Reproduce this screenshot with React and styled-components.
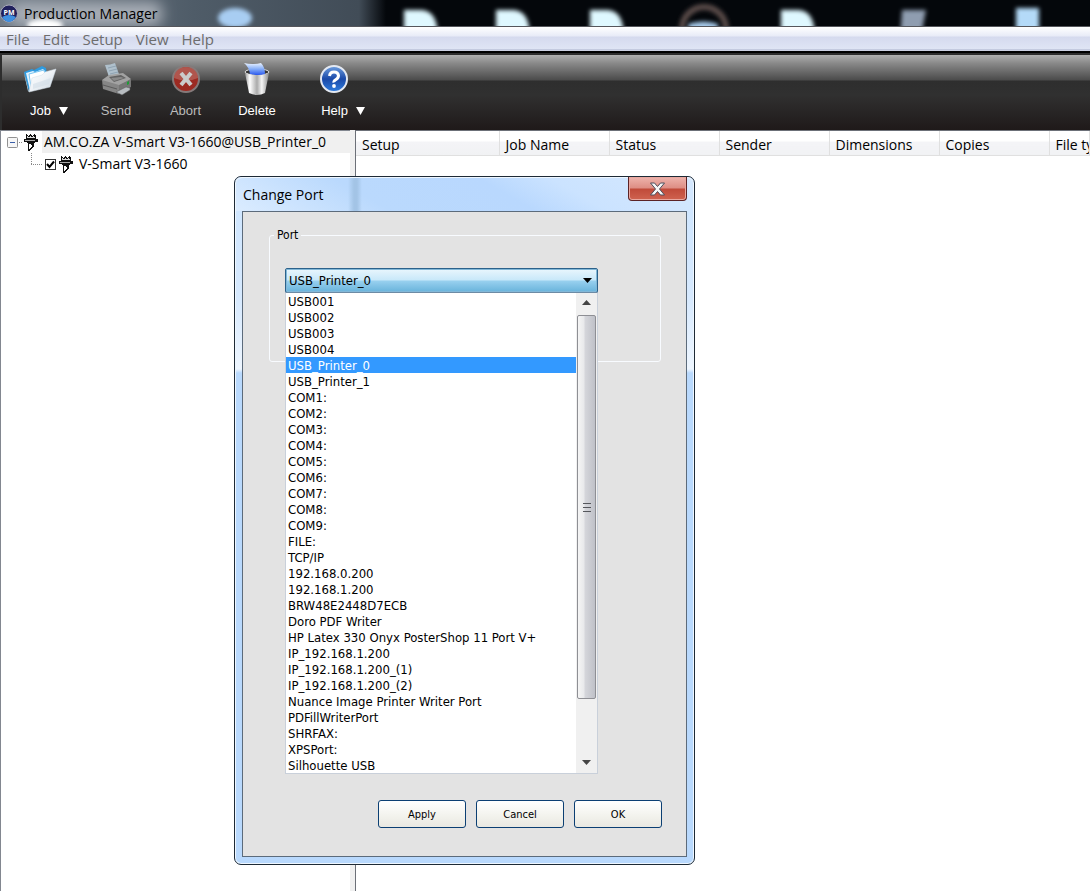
import React from 'react'
import styled, { createGlobalStyle } from 'styled-components'

const GlobalStyle = createGlobalStyle`
  * {
    box-sizing: border-box;
  }

  body {
    margin: 0;
    background: #fff;
    color: #000;
    font-family: 'Open Sans', 'Noto Sans', sans-serif;
    font-size: 14px;
  }

  button,
  select,
  input {
    margin: 0;
    font: inherit;
    color: inherit;
  }
`

const Window = styled.div`
  display: flex;
  flex-direction: column;
  min-height: 100vh;
  position: relative;
  overflow: hidden;
`

const TitleBar = styled.header`
  display: flex;
  align-items: center;
  gap: 5px;
  height: 27px;
  position: relative;
  overflow: hidden;
  background: #04070b;
  border-bottom: 1px solid #55565c;
`

const Backdrop = styled.svg`
  position: absolute;
  inset: 0;
  width: 100%;
  height: 26px;
`

const AppIcon = styled.svg`
  position: relative;
  width: 19px;
  height: 19px;
  flex: none;
`

const Title = styled.h1`
  position: relative;
  margin: 0;
  padding-top: 2px;
  font-size: 14px;
  line-height: 20px;
  font-weight: 400;
`

const MenuBar = styled.nav`
  display: flex;
  gap: 13px;
  height: 26px;
  padding: 0 6px;
  border-bottom: 2px solid #000;
  background: linear-gradient(
    #fff 0,
    #e8ebf7 9px,
    #d5daee 10px,
    #dfe5f5 22px,
    #a9b0ca 23px,
    #eef1fa 24px
  );
`

const MenuItem = styled.a`
  color: #6d6d6d;
  font-size: 15px;
  line-height: 24px;
  text-decoration: none;
`

const ToolBar = styled.div`
  display: flex;
  height: 77px;
  border: solid #2d2d2d;
  border-width: 2px 0 0 2px;
  background: linear-gradient(
    #b0b0b0 0,
    #8a8a8a 8px,
    #4b4b4b 25px,
    #2e2e2e 26px,
    #303030 40px,
    #1f1a1a 74px
  );
`

const Tool = styled.button`
  display: flex;
  flex-direction: column;
  align-items: center;
  gap: 7px;
  width: ${({ $width }) => $width}px;
  padding: 7px 0 0;
  border: 0;
  background: none;
  color: #fff;
  font-family: 'Liberation Sans', sans-serif;
  font-size: 13px;
  line-height: 16px;

  &:disabled {
    color: #bcbcbc;
  }
`

const ToolIcon = styled.svg`
  width: 34px;
  height: 34px;
  margin-right: ${({ $shift }) => ($shift ? '18px' : 0)};
`

const ToolLabel = styled.span`
  display: flex;
  align-items: center;
  gap: 8px;
`

const Caret = styled.svg`
  width: 9px;
  height: 8px;
`

const Workspace = styled.main`
  display: grid;
  grid-template-columns: 350px 1fr;
  gap: 5px;
  flex: 1;
  background: #f0f0f0;
`

const TreePane = styled.section`
  border: solid #828790;
  border-width: 1px 0 0 1px;
  background: #fff;
`

const TreeRow = styled.div`
  display: flex;
  align-items: center;
  height: 22px;
  padding-left: ${({ $child }) => ($child ? 30 : 6)}px;
`

const Expander = styled.svg`
  width: ${({ $width }) => $width}px;
  height: 22px;
  flex: none;
`

const PlotterIcon = styled.svg`
  width: 14px;
  height: 17px;
  flex: none;
  margin-left: ${({ $gap }) => $gap}px;
`

const TreeText = styled.label`
  flex: 1;
  margin-left: 4px;
  padding-left: 2px;
  line-height: 22px;
  white-space: nowrap;
  background: ${({ $active }) => ($active ? '#f0f0f0' : 'none')};
`

const TreeCheck = styled.input`
  appearance: none;
  width: 11px;
  height: 11px;
  flex: none;
  border: 1px solid #333;
  background: #fff
    url("data:image/svg+xml,%3Csvg xmlns='http://www.w3.org/2000/svg' viewBox='0 0 9 9'%3E%3Cpath d='M1 4l2.5 3L8 1.5' fill='none' stroke='%23000' stroke-width='2'/%3E%3C/svg%3E")
    center / 9px 9px no-repeat;
`

const JobPane = styled.section`
  overflow: hidden;
  border: solid #6c7078;
  border-width: 1px 0 0 1px;
  background: #fff;
`

const JobTable = styled.table`
  table-layout: fixed;
  width: 100%;
  border-collapse: collapse;
`

const Column = styled.th`
  width: ${({ $width }) => ($width ? `${$width}px` : 'auto')};
  height: 24px;
  padding: 3px 0 0 6px;
  border: solid #e0e0e0;
  border-width: 0 1px 1px 0;
  overflow: hidden;
  background: linear-gradient(#fff 10px, #f4f4f7 11px, #f1f2f4);
  font-weight: 400;
  text-align: left;
  white-space: nowrap;
`

const Dialog = styled.section`
  position: absolute;
  top: 176px;
  left: 234px;
  display: flex;
  flex-direction: column;
  width: 461px;
  height: 689px;
  padding: 0 7px 7px;
  border: 1px solid #1e2a36;
  border-radius: 7px;
  background:
    linear-gradient(#cde5ff 0, #d6e9fe 120px, #eef6ff 192px, transparent 196px),
    #b9d9fd;
  box-shadow: inset 0 0 0 1px #eff7ff;
`

const DialogHeader = styled.div`
  display: flex;
  justify-content: space-between;
  height: 34px;
  flex: none;
  margin: 0 -6px;
  padding-left: 7px;
  border-radius: 6px 6px 0 0;
  box-shadow: inset 0 1px #eff7ff;
  background:
    linear-gradient(90deg, transparent 112px, #a3c4e6 118px, #a3c4e6 121px, transparent 126px),
    linear-gradient(30deg, #dbecff 0, #bad9fd 30%, #b9d8fe 58%, #cbe3ff 72%, #d5e8fe);
`

const DialogTitle = styled.h2`
  margin: 0;
  font-size: 14px;
  line-height: 35px;
  font-weight: 400;
`

const CloseButton = styled.button`
  display: flex;
  align-items: center;
  justify-content: center;
  width: 59px;
  height: 24px;
  margin-right: 6px;
  padding: 0;
  border: 1px solid #5b2326;
  border-top: 0;
  border-radius: 0 0 4px 4px;
  background: linear-gradient(#eeb4ad, #dd8d84 11px, #c04a3a 12px, #cf6350);
  box-shadow: inset 0 0 0 1px #e9a8a0;
`

const DialogBody = styled.form`
  display: flex;
  flex-direction: column;
  flex: 1;
  padding: 15px 25px 28px 26px;
  border: 1px solid #5c6b7b;
  background: #e3e3e3;
  font-family: 'DejaVu Sans Condensed', 'DejaVu Sans', sans-serif;
  font-size: 13px;
`

const PortGroup = styled.fieldset`
  height: 135px;
  margin: 0;
  padding: 25px 15px 0;
  border: 1px solid #f8fbff;
  border-radius: 3px;
`

const Legend = styled.legend`
  margin-left: -11px;
  padding: 0 3px;
  font-size: 12px;
  line-height: 16px;
`

const PortField = styled.div`
  position: relative;
  width: 313px;
`

const PortSelect = styled.select`
  appearance: none;
  display: block;
  width: 100%;
  height: 25px;
  padding: 0 3px;
  border: 1px solid #2c628b;
  border-radius: 2px;
  outline: 0;
  background: linear-gradient(#e9f6fd, #c8e8f9 11px, #98d0ef 12px, #68b3db);
  box-shadow: inset 0 0 0 1px #82b8d8;
`

const SelectArrow = styled(Caret)`
  position: absolute;
  top: 10px;
  right: 6px;
  height: 5px;
  pointer-events: none;
`

const DropDown = styled.div`
  position: absolute;
  top: 24px;
  left: 0;
  display: flex;
  width: 313px;
  border: 1px solid #c9d0da;
  border-top-color: #6d8ba5;
  background: #fff;
`

const PortList = styled.ul`
  flex: 1;
  margin: 0;
  padding: 0;
  list-style: none;
`

const PortOption = styled.li`
  height: 16px;
  padding: 1px 0 0 2px;
  line-height: 16px;
  white-space: nowrap;
  color: ${({ $selected }) => ($selected ? '#fff' : '#000')};
  background: ${({ $selected }) => ($selected ? '#3399ff' : 'none')};
`

const ScrollBar = styled.div`
  display: flex;
  flex-direction: column;
  align-items: center;
  width: 21px;
  background: #f0f0f0;
`

const ScrollArrow = styled.svg`
  width: 9px;
  height: 22px;
  flex: none;
`

const Thumb = styled.div`
  display: flex;
  flex-direction: column;
  align-items: center;
  justify-content: center;
  gap: 3px;
  width: 19px;
  height: 384px;
  margin-bottom: auto;
  border: 1px solid #8e8f94;
  border-radius: 2px;
  background: linear-gradient(90deg, #f5f5f5 0, #e8e9eb 6px, #d5d6db 7px, #bfc1c8);
`

const Grip = styled.span`
  width: 8px;
  height: 1px;
  background: #55575c;
`

const Actions = styled.div`
  display: flex;
  justify-content: flex-end;
  gap: 10px;
  margin-top: auto;
  margin-right: -1px;
`

const ActionButton = styled.button`
  width: 88px;
  height: 28px;
  padding: 0;
  border: 1px solid #0b3f73;
  border-radius: 3px;
  background: linear-gradient(#fff, #f2f2ec 60%, #e9e8e2);
  font-size: 11px;
`

const menus = ['File', 'Edit', 'Setup', 'View', 'Help']

const columns = [
  ['Setup', 143],
  ['Job Name', 110],
  ['Status', 110],
  ['Sender', 110],
  ['Dimensions', 110],
  ['Copies', 110],
  ['File type'],
]

const ports = [
  'USB001',
  'USB002',
  'USB003',
  'USB004',
  'USB_Printer_0',
  'USB_Printer_1',
  'COM1:',
  'COM2:',
  'COM3:',
  'COM4:',
  'COM5:',
  'COM6:',
  'COM7:',
  'COM8:',
  'COM9:',
  'FILE:',
  'TCP/IP',
  '192.168.0.200',
  '192.168.1.200',
  'BRW48E2448D7ECB',
  'Doro PDF Writer',
  'HP Latex 330 Onyx PosterShop 11 Port V+',
  'IP_192.168.1.200',
  'IP_192.168.1.200_(1)',
  'IP_192.168.1.200_(2)',
  'Nuance Image Printer Writer Port',
  'PDFillWriterPort',
  'SHRFAX:',
  'XPSPort:',
  'Silhouette USB',
]

const DownCaret = () => (
  <Caret viewBox="0 0 9 8">
    <path d="M0 0h9L4.500 8z" fill="#fff" />
  </Caret>
)

function Plotter({ gap }) {
  return (
    <PlotterIcon viewBox="0 0 14 17" $gap={gap} shapeRendering="crispEdges">
      <path d="M2 0h1v1h1v1h1V1h1V0h1v1h1v1h1V1h1V0h1v1h1v4H2z" fill="#111" />
      <path d="M3 2h1v1h2V2h1v1h2V2h1v1h1v1H3z" fill="#ddd" />
      <path d="M0 5h14v3h-3v1H3V8H0z" fill="#111" />
      <path d="M1 6h10v1H1z" fill="#aaa" />
      <path d="M4 9h6v3l-4 5H4z" fill="#111" />
      <path d="M5 10h2l1 2-3 4z" fill="#fff" />
    </PlotterIcon>
  )
}

function JobIcon() {
  return (
    <ToolIcon viewBox="0 0 34 34" $shift>
      <defs>
        <linearGradient id="folder" x1="0" y1="0" x2="1" y2="1">
          <stop offset="0" stopColor="#fff" />
          <stop offset=".5" stopColor="#eef2f6" />
          <stop offset="1" stopColor="#c4d2de" />
        </linearGradient>
      </defs>
      <path d="M1 10l8-3 2 1 8-4 4 2 1 7L6 29z" fill="#2f9be0" />
      <path d="M3 11l7-2 2 1 8-3 2 2-1 11L7 28z" fill="#e4f4ff" />
      <path d="M6 12l15-4 2 10-15 7z" fill="#fff" stroke="#5bb7ee" strokeWidth=".8" />
      <path d="M1 10l5 20-1-1L2 16z" fill="#bfe2f8" />
      <path d="M9 16l10-3 3-3 11-3-6 18-21 5z" fill="url(#folder)" stroke="#d3dfe8" strokeWidth=".5" />
      <path d="M10 22l18-6-2 6-16 5z" fill="#d2dde8" opacity=".6" />
    </ToolIcon>
  )
}

function SendIcon() {
  return (
    <ToolIcon viewBox="0 0 34 34">
      <path d="M6 3q5 0 10-2l5 14-10 3z" fill="#afc0cc" />
      <path d="M9 6l8-2M10 9l8-2M11 12l8-2" stroke="#8fa3b2" />
      <path d="M3 18l7-5 14-2 8 6-10 7-15-2z" fill="#a2a2a2" />
      <path d="M10 15l12-2 5 3-12 4z" fill="#626262" />
      <path d="M12 16l10-1 3 1-10 3z" fill="#8a8a8a" />
      <path d="M3 18l17 5v9L4 27z" fill="#868686" />
      <path d="M20 23l12-6v8l-12 7z" fill="#767676" />
      <path d="M4 23l14 4" stroke="#5b5b5b" />
      <path d="M17 30l10-5 4 1v2l-8 5z" stroke="#555" strokeWidth=".5" fill="#b7bcc0" />
      <path d="M28 20l2-1v3l-2 1z" fill="#1d9c36" />
    </ToolIcon>
  )
}

function AbortIcon() {
  return (
    <ToolIcon viewBox="0 0 34 34">
      <circle cx="17" cy="17" r="13" fill="#9c2a22" stroke="#857a7a" strokeWidth="2" />
      <path d="M5 16a12 11 0 0 1 24 0q-12 5-24 0" fill="#b9685f" opacity=".7" />
      <path d="M12 11l10 12M22 11L12 23" stroke="#cbcbcb" strokeWidth="4" />
    </ToolIcon>
  )
}

function DeleteIcon() {
  return (
    <ToolIcon viewBox="0 0 34 34">
      <defs>
        <linearGradient id="bin">
          <stop offset="0" stopColor="#999" />
          <stop offset=".2" stopColor="#fff" />
          <stop offset=".5" stopColor="#aaa" />
          <stop offset=".7" stopColor="#f5f5f5" />
          <stop offset="1" stopColor="#888" />
        </linearGradient>
        <linearGradient id="sheet" x1="0" y1="0" x2="0" y2="1">
          <stop offset="0" stopColor="#eaf3ff" />
          <stop offset=".5" stopColor="#86aef8" />
          <stop offset="1" stopColor="#2a57ee" />
        </linearGradient>
      </defs>
      <ellipse cx="17" cy="10" rx="12" ry="3" fill="#333" stroke="#ddd" />
      <path d="M5 11q12 4 24 0l-4 20q-8 4-16 0z" fill="url(#bin)" />
      <path d="M4 1q8 2 17 0 4 4 4 11-7 2-15 0Q9 5 4 1z" fill="url(#sheet)" />
    </ToolIcon>
  )
}

function HelpIcon() {
  return (
    <ToolIcon viewBox="0 0 34 34" $shift>
      <defs>
        <linearGradient id="orb" x1="0" y1="0" x2="0" y2="1">
          <stop offset="0" stopColor="#6f9fe0" />
          <stop offset=".5" stopColor="#1a49a8" />
          <stop offset="1" stopColor="#2f7ee0" />
        </linearGradient>
      </defs>
      <circle cx="17" cy="17" r="13" fill="url(#orb)" stroke="#e4e9f2" strokeWidth="2" />
      <path d="M12.500 14q.5-4 4.500-4t4.500 3.500q0 2.500-2.500 4t-2 3" fill="none" stroke="#fff" strokeWidth="3" />
      <circle cx="17" cy="24" r="1.900" fill="#fff" />
    </ToolIcon>
  )
}

const tools = [
  { label: 'Job', Icon: JobIcon, menu: true, width: 94 },
  { label: 'Send', Icon: SendIcon, disabled: true, width: 40 },
  { label: 'Abort', Icon: AbortIcon, disabled: true, width: 99 },
  { label: 'Delete', Icon: DeleteIcon, width: 44 },
  { label: 'Help', Icon: HelpIcon, menu: true, width: 128 },
]

// blurred desktop showing through the title bar glass
function GlassBackdrop() {
  return (
    <Backdrop aria-hidden="true">
      <defs>
        <filter id="soft" x="-50%" y="-50%" width="200%" height="200%">
          <feGaussianBlur stdDeviation="2" />
        </filter>
        <filter id="wide" x="-50%" y="-50%" width="200%" height="200%">
          <feGaussianBlur stdDeviation="7" />
        </filter>
        <linearGradient id="haze">
          <stop offset="0" stopColor="#717b86" />
          <stop offset=".5" stopColor="#4f5c68" />
          <stop offset=".93" stopColor="#414c57" />
          <stop offset="1" stopColor="#04070b" />
        </linearGradient>
      </defs>
      <rect width="386" height="26" fill="url(#haze)" />
      <rect x="10" y="2" width="152" height="24" rx="8" fill="#a9afb7" filter="url(#wide)" />
      <ellipse cx="45" cy="25" rx="18" ry="6" fill="#fff" filter="url(#soft)" />
      <ellipse cx="235" cy="18" rx="17" ry="10" fill="#a8cdf2" filter="url(#soft)" />
      {[404, 496, 590, 781].map(x => (
        <path
          key={x}
          d={`M${x} 10h16c12 0 18 8 18 30h-34z`}
          fill="#dff8ff"
          filter="url(#soft)"
        />
      ))}
      <path d="M1016 8h23v32h-23z" fill="#b4daf8" filter="url(#soft)" />
      <path d="M902 10h24l-6 30h-20z" fill="#8f9db0" filter="url(#soft)" />
      <path d="M688 24q16-5 30 0v16h-30z" fill="#a8ccec" filter="url(#soft)" />
      <circle cx="704" cy="29" r="22" fill="none" stroke="#5a4c49" strokeWidth="6" filter="url(#soft)" />
    </Backdrop>
  )
}

function PortDialog() {
  return (
    <Dialog role="dialog" aria-labelledby="dialog-title">
      <DialogHeader>
        <DialogTitle id="dialog-title">Change Port</DialogTitle>
        <CloseButton aria-label="Close">
          <svg width="17" height="14" viewBox="0 0 17 14">
            <path
              d="M1.500 1h4l3 3.500 3-3.500h4l-5 6 5 6h-4l-3-3.500-3 3.500h-4l5-6z"
              fill="#f6f6f6"
              stroke="#4c4f5c"
            />
          </svg>
        </CloseButton>
      </DialogHeader>
      <DialogBody onSubmit={e => e.preventDefault()}>
        <PortGroup>
          <Legend>Port</Legend>
          <PortField>
            <PortSelect aria-label="Port" defaultValue="USB_Printer_0">
              {ports.map(port => (
                <option key={port}>{port}</option>
              ))}
            </PortSelect>
            <SelectArrow viewBox="0 0 9 5">
              <path d="M0 0h9L4.500 5z" />
            </SelectArrow>
            <DropDown>
              <PortList role="listbox" aria-label="Ports">
                {ports.map(port => (
                  <PortOption
                    key={port}
                    role="option"
                    aria-selected={port === 'USB_Printer_0'}
                    $selected={port === 'USB_Printer_0'}
                  >
                    {port}
                  </PortOption>
                ))}
              </PortList>
              <ScrollBar>
                <ScrollArrow viewBox="0 0 9 22">
                  <path d="M0 12h9L4.500 7z" fill="#444" />
                </ScrollArrow>
                <Thumb>
                  <Grip />
                  <Grip />
                  <Grip />
                </Thumb>
                <ScrollArrow viewBox="0 0 9 22">
                  <path d="M0 9h9l-4.500 5z" fill="#444" />
                </ScrollArrow>
              </ScrollBar>
            </DropDown>
          </PortField>
        </PortGroup>
        <Actions>
          <ActionButton type="button">Apply</ActionButton>
          <ActionButton type="button">Cancel</ActionButton>
          <ActionButton type="submit">OK</ActionButton>
        </Actions>
      </DialogBody>
    </Dialog>
  )
}

export default function App() {
  return (
    <Window>
      <GlobalStyle />
      <TitleBar>
        <GlassBackdrop />
        <AppIcon viewBox="0 0 19 19">
          <circle cx="9" cy="9.500" r="8.500" fill="#20205c" stroke="#aab" />
          <path d="M2 13q7-4 14 0-3 5-7 5t-7-5" fill="#3f8fe0" />
          <text x="9" y="11" fill="#fff" fontSize="7" fontWeight="700" textAnchor="middle">
            PM
          </text>
        </AppIcon>
        <Title>Production Manager</Title>
      </TitleBar>
      <MenuBar>
        {menus.map(menu => (
          <MenuItem key={menu} href="#">
            {menu}
          </MenuItem>
        ))}
      </MenuBar>
      <ToolBar>
        {tools.map(({ label, Icon, menu, disabled, width }) => (
          <Tool key={label} disabled={disabled} $width={width}>
            <Icon />
            <ToolLabel>
              {label}
              {menu && <DownCaret />}
            </ToolLabel>
          </Tool>
        ))}
      </ToolBar>
      <Workspace>
        <TreePane>
          <TreeRow>
            <Expander viewBox="0 0 16 22" $width={16}>
              <rect x=".5" y="6.500" width="10" height="10" rx="1" fill="#f6f6f6" stroke="#919191" />
              <path d="M3 11.500h5" stroke="#3a5fa8" />
              <path d="M12 11.500h4" stroke="#888" strokeDasharray="1 1" />
            </Expander>
            <Plotter gap={1} />
            <TreeText as="span" $active>
              AM.CO.ZA V-Smart V3-1660@USB_Printer_0
            </TreeText>
          </TreeRow>
          <TreeRow $child>
            <Expander viewBox="0 0 14 22" $width={14}>
              <path d="M.5 0v11.500M0 11.500h11" fill="none" stroke="#888" strokeDasharray="1 1" />
            </Expander>
            <TreeCheck id="printer" type="checkbox" defaultChecked />
            <Plotter gap={3} />
            <TreeText htmlFor="printer">V-Smart V3-1660</TreeText>
          </TreeRow>
        </TreePane>
        <JobPane>
          <JobTable>
            <thead>
              <tr>
                {columns.map(([name, width]) => (
                  <Column key={name} $width={width}>
                    {name}
                  </Column>
                ))}
              </tr>
            </thead>
          </JobTable>
        </JobPane>
      </Workspace>
      <PortDialog />
    </Window>
  )
}
